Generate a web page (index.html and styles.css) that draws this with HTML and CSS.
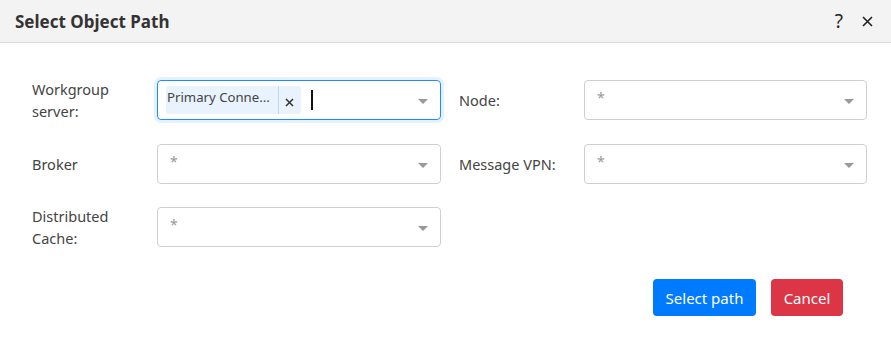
FILE: index.html
```html
<!DOCTYPE html>
<html>
<head>
<meta charset="utf-8">
<link rel="stylesheet" href="styles.css">
</head>
<body>
<div class="dialog">
  <div class="header">
    <div class="title">Select Object Path</div>
    <div class="header-actions">
      <span class="help">?</span>
      <svg class="close" width="11" height="11" viewBox="0 0 11 11"><path d="M1 1L10 10M10 1L1 10" stroke="#222" stroke-width="1.6" fill="none"/></svg>
    </div>
  </div>
  <div class="content">
    <div class="grid">
      <div class="item">
        <label class="label">Workgroup server:</label>
        <div class="select focused">
          <div class="tag">
            <span class="tag-text">Primary Conne...</span>
            <span class="tag-remove"><svg width="9" height="9" viewBox="0 0 9 9"><path d="M1 1L8 8M8 1L1 8" stroke="#333" stroke-width="1.5" fill="none"/></svg></span>
          </div>
          <span class="cursor"></span>
          <span class="caret"></span>
        </div>
      </div>
      <div class="item">
        <label class="label">Node:</label>
        <div class="select"><span class="placeholder">*</span><span class="caret"></span></div>
      </div>
      <div class="item">
        <label class="label">Broker</label>
        <div class="select"><span class="placeholder">*</span><span class="caret"></span></div>
      </div>
      <div class="item">
        <label class="label">Message VPN:</label>
        <div class="select"><span class="placeholder">*</span><span class="caret"></span></div>
      </div>
      <div class="item">
        <label class="label">Distributed Cache:</label>
        <div class="select"><span class="placeholder">*</span><span class="caret"></span></div>
      </div>
    </div>
    <div class="footer">
      <button class="btn btn-primary">Select path</button>
      <button class="btn btn-danger">Cancel</button>
    </div>
  </div>
</div>
</body>
</html>
```

FILE: styles.css
```css
* { box-sizing: border-box; }
html, body { margin: 0; padding: 0; background: #fff; }
body {
  font-family: "Noto Sans", "Open Sans", sans-serif;
  font-size: 14.5px;
  color: #444;
}
.dialog { width: 891px; height: 340px; }
.header {
  height: 43px;
  background: #f3f3f3;
  border-bottom: 1px solid #dcdcdc;
  display: flex;
  align-items: center;
  justify-content: space-between;
  padding: 0 18px 0 15px;
}
.title {
  font-size: 17px;
  font-weight: 700;
  color: #333;
}
.header-actions { display: flex; align-items: center; gap: 19px; }
.help { font-size: 19px; color: #222; line-height: 1; }
.close { display: block; }
.content { padding: 37px 24px 0 32px; }
.grid {
  display: grid;
  grid-template-columns: 409px 408px;
  column-gap: 18px;
  row-gap: 23.5px;
}
.item { display: flex; align-items: center; height: 40px; }
.label {
  width: 125px;
  flex: none;
  padding-right: 12px;
  line-height: 22px;
  color: #444;
}
.select {
  position: relative;
  flex: 1;
  height: 40px;
  border: 1px solid #cfcfcf;
  border-radius: 4px;
  display: flex;
  align-items: flex-start;
  padding-left: 8px;
}
.select.focused {
  border-color: #1f8bff;
  box-shadow: 0 0 0 3px rgba(31, 139, 255, 0.12);
  align-items: center;
}
.placeholder {
  color: #999;
  font-size: 14px;
  padding-left: 4px;
  padding-top: 8px;
  line-height: 18px;
}
.tag {
  display: flex;
  align-items: center;
  height: 28px;
  background: #e9f3fe;
  border-radius: 3px;
}
.tag-text {
  font-size: 13.2px;
  color: #444;
  padding: 0 8px 6px 1px;
  line-height: 16px;
  border-right: 1px solid #b9d8f5;
  height: 28px;
  display: flex;
  align-items: center;
}
.tag-remove {
  width: 22px;
  display: flex;
  justify-content: center;
  align-items: center;
  padding-top: 4px;
}
.tag-remove svg { display: block; }
.cursor {
  width: 2px;
  height: 20px;
  background: #111;
  margin-left: 10px;
}
.caret {
  position: absolute;
  right: 12px;
  top: 18px;
  width: 0;
  height: 0;
  border-left: 5px solid transparent;
  border-right: 5px solid transparent;
  border-top: 5px solid #999;
}
.footer {
  display: flex;
  justify-content: flex-end;
  gap: 15px;
  padding-right: 24px;
  margin-top: 32px;
}
.btn {
  font-family: inherit;
  font-size: 15px;
  height: 37px;
  border: none;
  border-radius: 4px;
  color: #fff;
  padding: 0 10px;
  cursor: pointer;
}
.btn-primary { background: #007bff; width: 103px; }
.btn-danger { background: #dc3545; width: 72px; }
```
